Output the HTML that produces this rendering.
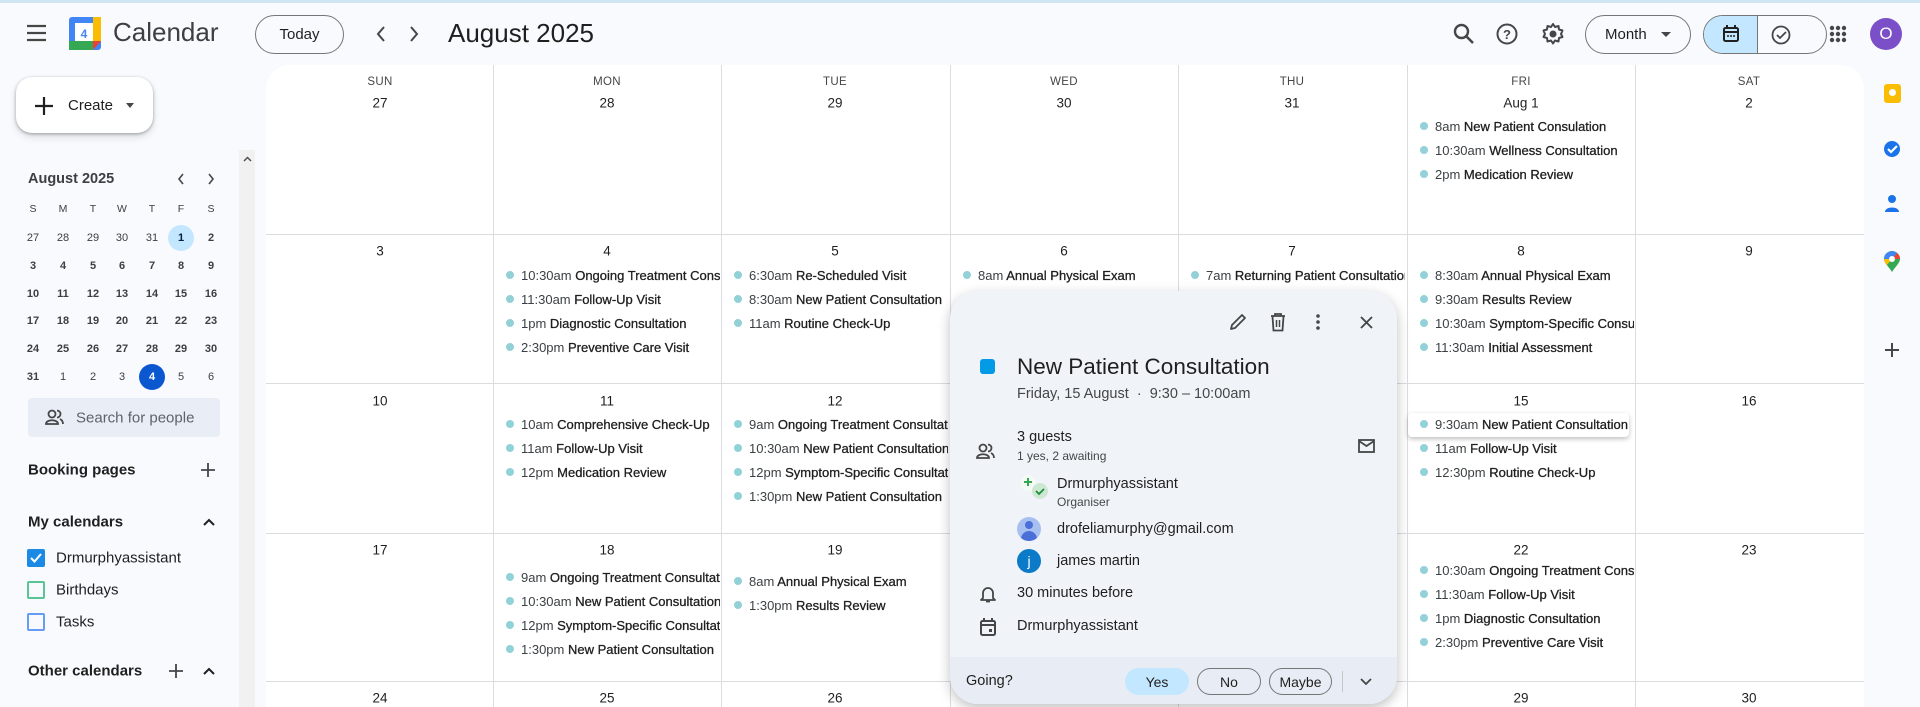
<!DOCTYPE html>
<html><head><meta charset="utf-8"><style>
*{box-sizing:border-box;margin:0;padding:0}
html,body{overflow:hidden}
body{width:1920px;height:707px;overflow:hidden;background:#f8fafd;font-family:"Liberation Sans",Arial,sans-serif;color:#1f1f1f;position:relative}
.a{position:absolute}
.topline{left:0;top:0;width:1920px;height:3px;background:#cfe6f2}
.pill{position:absolute;border:1px solid #747775;border-radius:24px;display:flex;align-items:center;justify-content:center;font-size:16px;color:#1f1f1f}
.grid{left:266px;top:65px;width:1598px;height:642px;background:#fff;border-radius:24px 24px 0 0;overflow:hidden}
.vl{position:absolute;top:0;width:1px;height:642px;background:#dadce0}
.hl{position:absolute;left:0;width:1598px;height:1px;background:#dadce0}
.dh{position:absolute;width:228px;text-align:center;font-size:11.5px;color:#444746;letter-spacing:.3px}
.dn{position:absolute;width:228px;text-align:center;font-size:13.5px;color:#1f1f1f;transform:translateY(-50%)}
.ev{position:absolute;height:22px;white-space:nowrap;overflow:hidden;font-size:13px;line-height:22px;color:#3c4043;transform:translateY(-50%)}
.ev i{display:inline-block;width:8px;height:8px;border-radius:50%;background:#93d1d8;margin:0 7px 0 0;vertical-align:1px}
.ev b{font-weight:400;color:#1f1f1f;-webkit-text-stroke:.3px #1f1f1f}
.mc{position:absolute;width:26px;height:26px;line-height:26px;text-align:center;font-size:11px;font-weight:700;color:#3c4043;transform:translate(-50%,-50%);border-radius:50%}
.sb{position:absolute;font-size:15px;color:#1f1f1f;transform:translateY(-50%)}
.pop{left:950px;top:291px;width:447px;height:413px;background:#f0f4f9;border-radius:28px;box-shadow:0 4px 12px rgba(0,0,0,.25);overflow:hidden}
.pt{position:absolute;transform:translateY(-50%);white-space:nowrap}
.btn{position:absolute;top:377px;height:27px;border:1px solid #747775;border-radius:14px;font-size:14px;display:flex;align-items:center;justify-content:center;color:#1f1f1f}
svg{position:absolute;overflow:visible}
</style></head><body>
<div class="a topline"></div>

<svg style="left:26px;top:24px" width="22" height="18" viewBox="0 0 22 18"><path d="M1 2h19M1 9h19M1 16h19" stroke="#444746" stroke-width="2.2"/></svg>
<svg style="left:69px;top:17px" width="32" height="33" viewBox="0 0 32 33"><rect x="0" y="0" width="32" height="33" rx="3" fill="#4285f4"/><rect x="0" y="24" width="24" height="9" fill="#34a853"/><rect x="24" y="0" width="8" height="24" fill="#fbbc04"/><path d="M24 24h8l-8 9z" fill="#ea4335"/><rect x="6" y="6" width="18" height="18" fill="#fff"/><text x="15" y="21" font-size="12" text-anchor="middle" fill="#4285f4" font-family="Liberation Sans" font-weight="700">4</text></svg>
<div class="a" style="left:113px;top:17px;font-size:26px;color:#3c4043">Calendar</div>
<div class="pill" style="left:255px;top:15px;width:89px;height:39px;font-size:15px">Today</div>
<svg style="left:376px;top:26px" width="10" height="16"><path d="M8 1L2 8l6 7" fill="none" stroke="#444746" stroke-width="2"/></svg>
<svg style="left:409px;top:26px" width="10" height="16"><path d="M2 1l6 7-6 7" fill="none" stroke="#444746" stroke-width="2"/></svg>
<div class="a" style="left:448px;top:18px;font-size:26px;color:#1f1f1f">August 2025</div>
<svg style="left:1453px;top:23px" width="22" height="22"><circle cx="8.5" cy="8.5" r="6.5" fill="none" stroke="#444746" stroke-width="2.4"/><path d="M13 13l7 7" stroke="#444746" stroke-width="2.6"/></svg>
<svg style="left:1496px;top:23px" width="22" height="22"><circle cx="11" cy="11" r="9.5" fill="none" stroke="#444746" stroke-width="2"/><text x="11" y="16" font-size="13" text-anchor="middle" fill="#444746" font-family="Liberation Sans" font-weight="700">?</text></svg>
<svg style="left:1541px;top:22px" width="24" height="24" viewBox="0 0 24 24"><path d="M12 2l2 3 3.5-1 .5 3.5 3.5 1-1.5 3.5 1.5 3-3.5 1-.5 3.5-3.5-1-2 3-2-3-3.5 1-.5-3.5-3.5-1 1.5-3-1.5-3.5 3.5-1 .5-3.5 3.5 1z" fill="none" stroke="#444746" stroke-width="2" stroke-linejoin="round"/><circle cx="12" cy="12" r="3.5" fill="#444746"/></svg>
<div class="pill" style="left:1585px;top:15px;width:106px;height:39px;justify-content:flex-start;padding-left:19px;font-size:15px">Month<span style="margin-left:14px;border-left:5px solid transparent;border-right:5px solid transparent;border-top:5px solid #444746"></span></div>
<div class="a" style="left:1703px;top:15px;width:124px;height:39px;border:1px solid #747775;border-radius:24px;overflow:hidden"><div style="position:absolute;left:0;top:0;width:54px;height:39px;background:#c2e7ff;border-right:1px solid #747775"></div></div>
<svg style="left:1723px;top:25px" width="16" height="18"><rect x="1" y="3" width="14" height="13" rx="1.5" fill="none" stroke="#1f1f1f" stroke-width="2"/><path d="M1 7h14M4 0v4M12 0v4" stroke="#1f1f1f" stroke-width="2"/><path d="M4 11h2M7 11h2M10 11h2" stroke="#1f1f1f" stroke-width="1.5"/></svg>
<svg style="left:1771px;top:25px" width="20" height="20"><circle cx="10" cy="10" r="8.5" fill="none" stroke="#444746" stroke-width="1.8"/><path d="M6 10l3 3 6-6" fill="none" stroke="#444746" stroke-width="1.8"/></svg>
<svg style="left:1829px;top:25px" width="18" height="18"><g fill="#444746"><circle cx="3" cy="3" r="2.2"/><circle cx="9" cy="3" r="2.2"/><circle cx="15" cy="3" r="2.2"/><circle cx="3" cy="9" r="2.2"/><circle cx="9" cy="9" r="2.2"/><circle cx="15" cy="9" r="2.2"/><circle cx="3" cy="15" r="2.2"/><circle cx="9" cy="15" r="2.2"/><circle cx="15" cy="15" r="2.2"/></g></svg>
<div class="a" style="left:1870px;top:18px;width:32px;height:32px;border-radius:50%;background:#7b4fc8;color:#fff;font-size:17px;text-align:center;line-height:32px">O</div>

<div class="a" style="left:1884px;top:84px;width:17px;height:19px;background:#fbbc04;border-radius:3px"><div style="margin:5px auto 0;width:7px;height:7px;border-radius:50%;background:#fff"></div></div>
<svg style="left:1883px;top:140px" width="18" height="18"><circle cx="9" cy="9" r="8" fill="#1a73e8"/><path d="M5 9l3 3 6-6" fill="none" stroke="#fff" stroke-width="2.2"/></svg>
<svg style="left:1885px;top:194px" width="14" height="18"><circle cx="7" cy="5" r="4" fill="#1a73e8"/><path d="M0 18c0-6 14-6 14 0z" fill="#1a73e8"/></svg>
<svg style="left:1884px;top:251px" width="16" height="21" viewBox="0 0 16 21"><path d="M8 21C5 16 0 12 0 8a8 8 0 0116 0c0 4-5 8-8 13z" fill="#34a853"/><path d="M0 8a8 8 0 0113-6L8 8z" fill="#4285f4"/><path d="M13 2a8 8 0 013 6L8 8z" fill="#ea4335"/><path d="M0 8l8 0-5 6C1 12 0 10 0 8z" fill="#fbbc04"/><circle cx="8" cy="8" r="3" fill="#fff"/></svg>
<svg style="left:1885px;top:343px" width="14" height="14"><path d="M7 0v14M0 7h14" stroke="#444746" stroke-width="2"/></svg>

<div class="a" style="left:16px;top:77px;width:137px;height:56px;background:#fff;border-radius:16px;box-shadow:0 1px 3px rgba(0,0,0,.3),0 4px 8px rgba(0,0,0,.12)"></div>
<svg style="left:35px;top:97px" width="18" height="18"><path d="M9 0v18M0 9h18" stroke="#1f1f1f" stroke-width="2.2"/></svg>
<div class="a" style="left:68px;top:97px;font-size:15px;color:#1f1f1f">Create</div>
<div class="a" style="left:126px;top:103px;border-left:4.5px solid transparent;border-right:4.5px solid transparent;border-top:5px solid #444746"></div>
<div class="a" style="left:239px;top:150px;width:16px;height:557px;background:#f1f1f1"></div>
<svg style="left:243px;top:156px" width="9" height="6"><path d="M1 5l3.5-3.5L8 5" fill="none" stroke="#505050" stroke-width="1.5"/></svg>

<div class="sb" style="left:28px;top:179px;font-size:14.5px;font-weight:700;color:#3c4043">August 2025</div>
<svg style="left:177px;top:173px" width="8" height="12"><path d="M6 1L2 6l4 5" fill="none" stroke="#444746" stroke-width="1.6"/></svg>
<svg style="left:207px;top:173px" width="8" height="12"><path d="M2 1l4 5-4 5" fill="none" stroke="#444746" stroke-width="1.6"/></svg>
<div id="mini"></div>

<div class="a" style="left:28px;top:398px;width:192px;height:39px;background:#e9eef6;border-radius:4px"></div>
<svg style="left:45px;top:409px" width="20" height="16"><circle cx="7" cy="5" r="3.5" fill="none" stroke="#444746" stroke-width="1.8"/><path d="M1 15c0-5 12-5 12 0z" fill="none" stroke="#444746" stroke-width="1.8"/><path d="M12 1.5a3.5 3.5 0 010 7M15 10c2 1 3 2.5 3 5" fill="none" stroke="#444746" stroke-width="1.8"/></svg>
<div class="sb" style="left:76px;top:418px;color:#5f6368;font-size:15px">Search for people</div>

<div class="sb" style="left:28px;top:470px;font-weight:700;color:#1f1f1f;font-size:15px">Booking pages</div>
<svg style="left:201px;top:463px" width="14" height="14"><path d="M7 0v14M0 7h14" stroke="#444746" stroke-width="1.8"/></svg>
<div class="sb" style="left:28px;top:522px;font-weight:700;font-size:15px">My calendars</div>
<svg style="left:203px;top:518px" width="12" height="8"><path d="M1 7l5-5 5 5" fill="none" stroke="#1f1f1f" stroke-width="2"/></svg>
<div class="a" style="left:27px;top:549px;width:18px;height:18px;background:#1a8ae5;border-radius:2px"></div>
<svg style="left:30px;top:553px" width="12" height="10"><path d="M1 5l3.5 3.5L11 1" fill="none" stroke="#fff" stroke-width="2"/></svg>
<div class="sb" style="left:56px;top:558px">Drmurphyassistant</div>
<div class="a" style="left:27px;top:581px;width:18px;height:18px;border:2px solid #33b679;border-radius:2px;opacity:.8"></div>
<div class="sb" style="left:56px;top:590px">Birthdays</div>
<div class="a" style="left:27px;top:613px;width:18px;height:18px;border:2px solid #4285f4;border-radius:2px;opacity:.8"></div>
<div class="sb" style="left:56px;top:622px">Tasks</div>
<div class="sb" style="left:28px;top:671px;font-weight:700;font-size:15px">Other calendars</div>
<svg style="left:169px;top:664px" width="14" height="14"><path d="M7 0v14M0 7h14" stroke="#444746" stroke-width="1.8"/></svg>
<svg style="left:203px;top:667px" width="12" height="8"><path d="M1 7l5-5 5 5" fill="none" stroke="#1f1f1f" stroke-width="2"/></svg>

<div class="a grid" id="grid"></div>

<div class="a pop">
  <div class="a" style="left:0;top:366px;width:447px;height:47px;background:#e8edf5"></div>
  <svg style="left:279px;top:22px" width="18" height="18"><path d="M2 16l1-4L13 2l3 3L6 15z" fill="none" stroke="#444746" stroke-width="1.8" stroke-linejoin="round"/></svg>
  <svg style="left:320px;top:22px" width="16" height="19"><path d="M1 3h14M5 3V1h6v2M2.5 3.5l1 14h9l1-14" fill="none" stroke="#444746" stroke-width="1.8"/><path d="M6.5 7v7M9.5 7v7" stroke="#444746" stroke-width="1.5"/></svg>
  <svg style="left:366px;top:22px" width="4" height="18"><circle cx="2" cy="3" r="1.8" fill="#444746"/><circle cx="2" cy="9" r="1.8" fill="#444746"/><circle cx="2" cy="15" r="1.8" fill="#444746"/></svg>
  <svg style="left:410px;top:25px" width="13" height="13"><path d="M1 1l11 11M12 1L1 12" stroke="#444746" stroke-width="1.9"/></svg>
  <div class="a" style="left:30px;top:68px;width:15px;height:15px;background:#039be5;border-radius:3px"></div>
  <div class="pt" style="left:67px;top:76px;font-size:22.5px;color:#1f1f1f">New Patient Consultation</div>
  <div class="pt" style="left:67px;top:103px;font-size:14.5px;color:#444746">Friday, 15 August &nbsp;·&nbsp; 9:30 – 10:00am</div>
  <svg style="left:26px;top:152px" width="20" height="16"><circle cx="7" cy="5" r="3.5" fill="none" stroke="#444746" stroke-width="1.8"/><path d="M1 15c0-5 12-5 12 0z" fill="none" stroke="#444746" stroke-width="1.8"/><path d="M12 1.5a3.5 3.5 0 010 7M15 10c2 1 3 2.5 3 5" fill="none" stroke="#444746" stroke-width="1.8"/></svg>
  <div class="pt" style="left:67px;top:146px;font-size:14.5px;color:#1f1f1f">3 guests</div>
  <div class="pt" style="left:67px;top:165px;font-size:12px;color:#444746">1 yes, 2 awaiting</div>
  <svg style="left:408px;top:148px" width="17" height="14"><rect x="1" y="1" width="15" height="12" fill="none" stroke="#444746" stroke-width="1.8"/><path d="M1 2l7.5 5L16 2" fill="none" stroke="#444746" stroke-width="1.8"/></svg>
  <svg style="left:67px;top:181px" width="33" height="30"><circle cx="11" cy="11" r="8" fill="#f4faf4"/><path d="M11 6v8M7 10h8" stroke="#34a853" stroke-width="2"/><circle cx="23" cy="19" r="8" fill="#cde8d2"/><path d="M19 19l3 3 5-5" fill="none" stroke="#1e8e3e" stroke-width="1.8"/></svg>
  <div class="pt" style="left:107px;top:193px;font-size:14.5px">Drmurphyassistant</div>
  <div class="pt" style="left:107px;top:211px;font-size:12px;color:#444746">Organiser</div>
  <div class="a" style="left:67px;top:226px;width:24px;height:24px;border-radius:50%;background:#a8c0f0;overflow:hidden"><div style="position:absolute;left:8px;top:4px;width:8px;height:8px;border-radius:50%;background:#4a6fd8"></div><div style="position:absolute;left:4px;top:14px;width:16px;height:10px;border-radius:8px 8px 0 0;background:#4a6fd8"></div></div>
  <div class="pt" style="left:107px;top:238px;font-size:14.5px">drofeliamurphy@gmail.com</div>
  <div class="a" style="left:67px;top:258px;width:24px;height:24px;border-radius:50%;background:#0b7ac9;color:#fff;text-align:center;line-height:24px;font-size:14px">j</div>
  <div class="pt" style="left:107px;top:270px;font-size:14.5px">james martin</div>
  <svg style="left:30px;top:294px" width="16" height="18"><path d="M3 13V8a5 5 0 0110 0v5l2 2H1z" fill="none" stroke="#444746" stroke-width="1.8" stroke-linejoin="round"/><path d="M6 16.5h4" stroke="#444746" stroke-width="1.8"/></svg>
  <div class="pt" style="left:67px;top:302px;font-size:14.5px;color:#1f1f1f">30 minutes before</div>
  <svg style="left:30px;top:327px" width="16" height="18"><rect x="1" y="3" width="14" height="14" rx="1.5" fill="none" stroke="#444746" stroke-width="2"/><path d="M1 7h14M4 0v4M12 0v4" stroke="#444746" stroke-width="2"/><rect x="9" y="11" width="3" height="3" fill="#444746"/></svg>
  <div class="pt" style="left:67px;top:335px;font-size:14.5px">Drmurphyassistant</div>
  <div class="pt" style="left:16px;top:390px;font-size:14.5px;color:#1f1f1f">Going?</div>
  <div class="btn" style="left:175px;width:64px;background:#c2e7ff;border-color:#c2e7ff">Yes</div>
  <div class="btn" style="left:247px;width:64px">No</div>
  <div class="btn" style="left:319px;width:63px">Maybe</div>
  <div class="a" style="left:392px;top:380px;width:1px;height:21px;background:#c4c7c5"></div>
  <svg style="left:410px;top:387px" width="12" height="8"><path d="M1 1l5 5 5-5" fill="none" stroke="#444746" stroke-width="1.8"/></svg>
</div>

<script>
const g=document.getElementById('grid');
const cols=[0,227,455,684,912,1141,1369];
const rows=[0,169,318,468,616];
let h='';
for(let i=1;i<7;i++)h+=`<div class="vl" style="left:${cols[i]}px"></div>`;
for(let i=1;i<5;i++)h+=`<div class="hl" style="top:${rows[i]}px"></div>`;
const days=['SUN','MON','TUE','WED','THU','FRI','SAT'];
days.forEach((d,i)=>h+=`<div class="dh" style="left:${cols[i]}px;top:11px">${d}</div>`);
const nums=[[27,28,29,30,31,'Aug 1',2],[3,4,5,6,7,8,9],[10,11,12,13,14,15,16],[17,18,19,20,21,22,23],[24,25,26,27,28,29,30]];
const dy=[38,186,336,485,633];
nums.forEach((r,ri)=>r.forEach((n,ci)=>h+=`<div class="dn" style="left:${cols[ci]}px;top:${dy[ri]}px">${n}</div>`));
const ev=[
[0,5,62,[['8am','New Patient Consulation'],['10:30am','Wellness Consultation'],['2pm','Medication Review']]],
[1,1,211,[['10:30am','Ongoing Treatment Consultation'],['11:30am','Follow-Up Visit'],['1pm','Diagnostic Consultation'],['2:30pm','Preventive Care Visit']]],
[1,2,211,[['6:30am','Re-Scheduled Visit'],['8:30am','New Patient Consultation'],['11am','Routine Check-Up']]],
[1,3,211,[['8am','Annual Physical Exam'],['10am','Wellness Visit']]],
[1,4,211,[['7am','Returning Patient Consultation']]],
[1,5,211,[['8:30am','Annual Physical Exam'],['9:30am','Results Review'],['10:30am','Symptom-Specific Consultation'],['11:30am','Initial Assessment']]],
[2,1,360,[['10am','Comprehensive Check-Up'],['11am','Follow-Up Visit'],['12pm','Medication Review']]],
[2,2,360,[['9am','Ongoing Treatment Consultation'],['10:30am','New Patient Consultation'],['12pm','Symptom-Specific Consultation'],['1:30pm','New Patient Consultation']]],
[2,5,360,[['9:30am','New Patient Consultation'],['11am','Follow-Up Visit'],['12:30pm','Routine Check-Up']]],
[3,1,513,[['9am','Ongoing Treatment Consultation'],['10:30am','New Patient Consultation'],['12pm','Symptom-Specific Consultation'],['1:30pm','New Patient Consultation']]],
[3,2,517,[['8am','Annual Physical Exam'],['1:30pm','Results Review']]],
[3,5,506,[['10:30am','Ongoing Treatment Consultation'],['11:30am','Follow-Up Visit'],['1pm','Diagnostic Consultation'],['2:30pm','Preventive Care Visit']]]
];
ev.forEach(([r,c,t,list])=>list.forEach((e,k)=>{
 const hi=(r==2&&c==5&&k==0);
 h+=`<div class="ev" style="left:${cols[c]+(hi?1:9)}px;top:${t+k*24}px;width:${hi?221:218}px;padding-left:${hi?12:4}px;${hi?'background:#fff;box-shadow:0 2px 5px rgba(0,0,0,.25);border-radius:4px;height:24px;line-height:24px;':''}"><i></i>${e[0]} <b>${e[1]}</b></div>`;
}));
g.innerHTML=h;
const m=document.getElementById('mini');
const xs=[33,63,93,122,152,181,211];let s='';
['S','M','T','W','T','F','S'].forEach((d,i)=>s+=`<div class="mc" style="left:${xs[i]}px;top:209px;font-weight:400;font-size:10.5px">${d}</div>`);
const mr=[[27,28,29,30,31,1,2],[3,4,5,6,7,8,9],[10,11,12,13,14,15,16],[17,18,19,20,21,22,23],[24,25,26,27,28,29,30],[31,1,2,3,4,5,6]];
mr.forEach((r,ri)=>r.forEach((n,ci)=>{let st='';
 if(ri==0&&ci==5)st='background:#c2e7ff;color:#041e49;';
 if(ri==5&&ci==4)st='background:#0b57d0;color:#fff;';
 const dim=(ri==0&&ci<5)||(ri==5&&ci>0);
 s+=`<div class="mc" style="left:${xs[ci]}px;top:${238+ri*27.8}px;${dim&&!st?'font-weight:400;':''}${st}">${n}</div>`;}));
m.innerHTML=s;
</script>
</body></html>
